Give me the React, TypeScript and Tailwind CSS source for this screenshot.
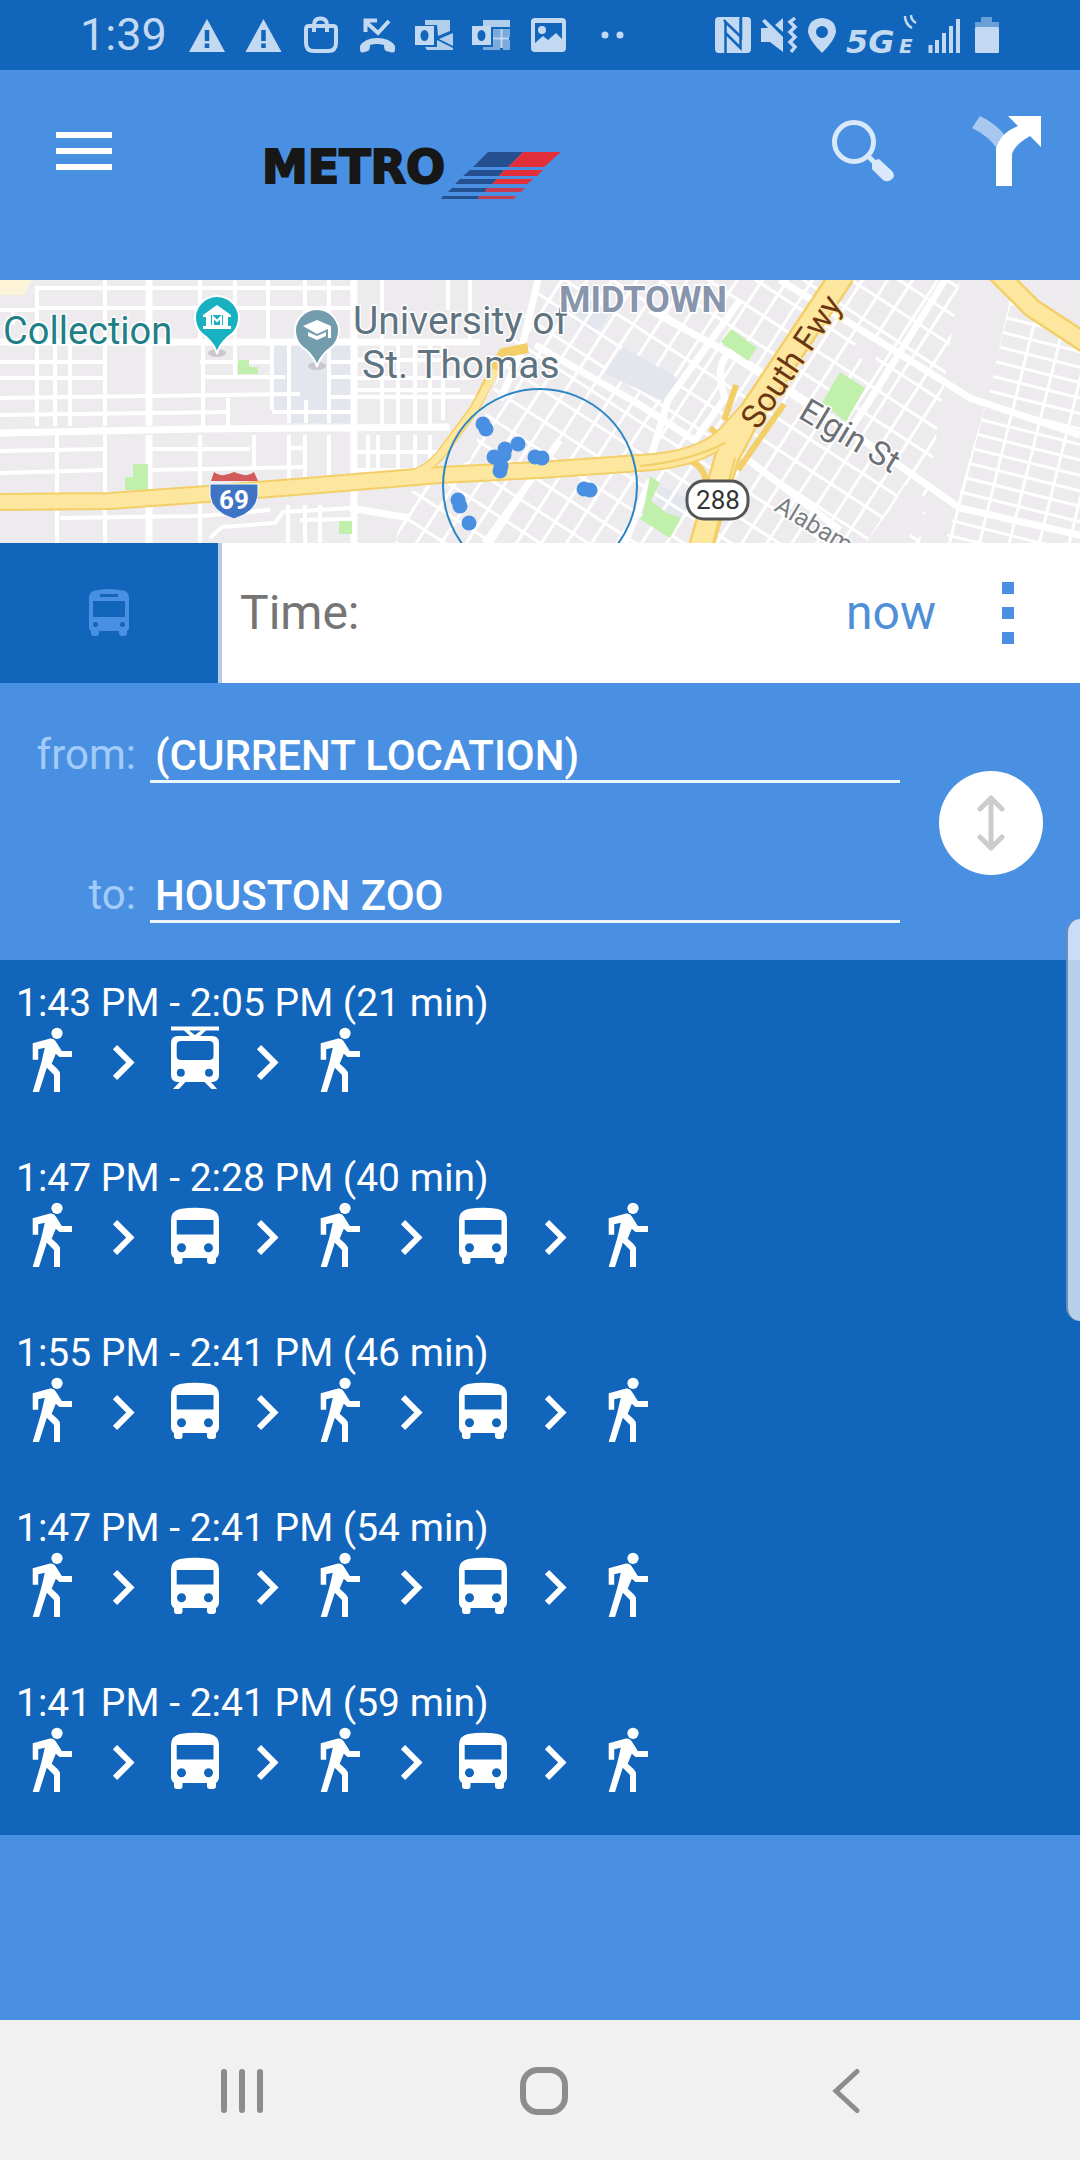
import React, { useState } from 'react';

type Leg = 'walk' | 'tram' | 'bus';

interface Trip {
    id: number;
    time: string;
    legs: Leg[];
}

const trips: Trip[] = [
    { id: 1, time: '1:43 PM - 2:05 PM (21 min)', legs: ['walk', 'tram', 'walk'] },
    { id: 2, time: '1:47 PM - 2:28 PM (40 min)', legs: ['walk', 'bus', 'walk', 'bus', 'walk'] },
    { id: 3, time: '1:55 PM - 2:41 PM (46 min)', legs: ['walk', 'bus', 'walk', 'bus', 'walk'] },
    { id: 4, time: '1:47 PM - 2:41 PM (54 min)', legs: ['walk', 'bus', 'walk', 'bus', 'walk'] },
    { id: 5, time: '1:41 PM - 2:41 PM (59 min)', legs: ['walk', 'bus', 'walk', 'bus', 'walk'] },
];

const legNames: Record<Leg, string> = { walk: 'Walk', tram: 'Rail', bus: 'Bus' };

const LegIcon: React.FC<{ leg: Leg }> = ({ leg }) => (
    <svg viewBox="0 0 72 72" className="size-[72px] shrink-0" fill="white" role="img" aria-label={legNames[leg]}>
        {leg === 'walk' && (
            <>
                <circle cx="41" cy="9.3" r="5.6" />
                <path d="M16.7 19.3L34 14.6Q37.5 14 39.5 17L45.8 27H56V33H43.5L39.8 29.7L35.7 39.7L41.5 45Q44 47.500 44 50V68H38V51L30.800 43.7L23 68H16.700L25.300 38.700L28.800 23.700L22.200 25.300V35.700H16.700Z" />
            </>
        )}
        {leg === 'tram' && (
            <>
                <path d="M11 2.500H59V6.500H46L40 12H30L24 6.500H11ZM29 6.500L35 11L41 6.500Z" fillRule="evenodd" />
                <path
                    fillRule="evenodd"
                    d="M18 12H52Q59 12 59 19V51Q59 58 52 58H51L57 65H51.500L44.500 58H25.500L19 65H13L19.500 58H18Q11 58 11 51V19Q11 12 18 12ZM21 17Q16.700 17 16.700 21V32Q16.700 36 21 36H49Q53.500 36 53.500 32V21Q53.500 17 49 17ZM16.800 48.700A4 4 0 1 0 24.800 48.700A4 4 0 1 0 16.800 48.700ZM45 48.700A4 4 0 1 0 53 48.700A4 4 0 1 0 45 48.700Z"
                />
            </>
        )}
        {leg === 'bus' && (
            <path
                fillRule="evenodd"
                d="M11 21Q11 12 20 10Q35 7.500 50 10Q59 12 59 21V53Q59 57 56 59V62Q56 65 53 65H50Q47 65 47 62V59H22.500V62Q22.500 65 20 65H17Q14 65 14 62V59Q11 57 11 53ZM16.700 21V35.500H53.500V21ZM17 48.700A4.500 4.500 0 1 0 26 48.700A4.500 4.500 0 1 0 17 48.700ZM44 48.700A4.500 4.500 0 1 0 53 48.700A4.500 4.500 0 1 0 44 48.700Z"
            />
        )}
    </svg>
);

const Chevron: React.FC = () => (
    <svg viewBox="0 0 72 72" className="size-[72px] shrink-0" fill="none" stroke="white" strokeWidth="6" aria-hidden="true">
        <path d="M27 23.200L42.300 38.500L27 53.800" />
    </svg>
);

const StatusBar: React.FC = () => (
    <div className="flex h-[70px] items-center justify-between bg-[#1165bb] px-20 text-[#c3d9f1]">
        <div className="flex items-center">
            <span className="w-[108px] text-[45px] leading-[48px]">1:39</span>
            <svg viewBox="189 0 440 70" className="h-[70px] w-[440px]" fill="currentColor" aria-hidden="true">
                {[208, 264.5].map((x) => (
                    <g key={x}>
                        <path d={`M${x} 19L${x + 18} 52H${x - 18}Z`} />
                        <path d={`M${x} 30V41M${x} 43.500V48`} stroke="#1165bb" strokeWidth="4.500" />
                    </g>
                ))}
                <path d="M310 26H334Q337 26 337 29V43Q337 51 329 51H315Q307 51 307 43V29Q307 26 310 26ZM315 32V25Q315 18.500 321.500 18.500Q328 18.500 328 25V32" fill="none" stroke="currentColor" strokeWidth="4" />
                <path d="M367 22L379 33L390 21M366.500 32V20.500H378" fill="none" stroke="currentColor" strokeWidth="4" />
                <path d="M361 50V46Q366 38 378 38Q391 38 396 46V50Q396 53 393 52.500L387 51Q385 50 385 45Q378 43 371 45Q371 50 369 51L364 52.500Q361 53 361 50Z" />
                <path d="M426 20H451V31L439 36L438 25H426ZM454 33V46L440 39ZM426 47H438V40L454 48V50H428Z" opacity=".9" />
                <path fillRule="evenodd" d="M416 26H435V45H416ZM425.500 30A4 5.500 0 1 0 425.500 41A4 5.500 0 1 0 425.500 30Z" />
                <path d="M484 20H511V27H484Z" opacity=".9" />
                <path d="M494 29H501V37H494ZM504 29H511V37H504ZM494 40H501V50H484V47H494ZM504 40H511V50H504Z" opacity=".6" />
                <path d="M494 38.500H510M502.500 29V48" stroke="currentColor" strokeWidth="2.500" />
                <path fillRule="evenodd" d="M473 26H492V45H473ZM482.500 30A4 5.500 0 1 0 482.500 41A4 5.500 0 1 0 482.500 30Z" />
                <path fillRule="evenodd" d="M536 18H563Q567 18 567 22V48Q567 52 563 52H536Q532 52 532 48V22Q532 18 536 18ZM536 23V43L544 36L549 40L557 33L563 39V23Z" />
                <circle cx="543" cy="30" r="4" />
                <circle cx="606" cy="35" r="3.500" />
                <circle cx="621" cy="35" r="3.500" />
            </svg>
        </div>
        <svg viewBox="712 0 288 70" className="h-[70px] w-[288px]" fill="currentColor" aria-hidden="true">
            <rect x="715" y="17" width="36" height="36" rx="4" />
            <path d="M725.500 53V22L741 37V17M725.500 22L724 20M740.500 18V48L725.500 33" fill="none" stroke="#1165bb" strokeWidth="2.500" />
            <path d="M761 28H768L762 21L765 19L783 37V52L770 42H761ZM783 18V32L775 25Z" />
            <path d="M795 18L790 22L795 27L790 32L795 37L790 42L795 47L791 52" fill="none" stroke="currentColor" strokeWidth="3.500" />
            <path fillRule="evenodd" d="M822 18Q836 19 836 32Q835 40 822 53Q809 40 808 32Q808 19 822 18ZM822 26A6 6 0 1 0 822 38A6 6 0 1 0 822 26Z" />
            <text x="846" y="53" fontFamily="DejaVu Sans, sans-serif" fontStyle="italic" fontWeight="700" fontSize="32">5G</text>
            <text x="899" y="53" fontFamily="DejaVu Sans, sans-serif" fontStyle="italic" fontWeight="700" fontSize="20">E</text>
            <path d="M905 16Q905 24 912 28M911 15Q911 20 916 23" fill="none" stroke="currentColor" strokeWidth="2.500" />
            <path d="M930.500 45V53M937 40V53M944 33V53M951 26V53M958 19V53" stroke="currentColor" strokeWidth="4" />
            <path d="M981 17H992V22H999V27H975V22H981Z" opacity=".5" />
            <rect x="975" y="27" width="24" height="26" rx="1" />
        </svg>
    </div>
);

const Header: React.FC = () => (
    <header className="flex h-[210px] items-center bg-[#4a90e2] pr-[38px] pb-12 pl-14">
        <button aria-label="Menu" className="flex w-14 flex-col gap-[10px]">
            <span className="h-[6px] w-full bg-white" />
            <span className="h-[6px] w-full bg-white" />
            <span className="h-[6px] w-full bg-white" />
        </button>
        <a href="#" className="mt-12 ml-[150px] flex items-start">
            <span className="font-['DejaVu_Sans',sans-serif] text-[46px] leading-8 font-bold text-[#171717] [-webkit-text-stroke:2px_#171717]">METRO</span>
            <svg viewBox="0 0 120 48" className="-ml-1 h-12 w-[120px]" aria-hidden="true">
                <path fill="#25508f" d="M47 1H82L67 16H32ZM29 19H63L58 25H22ZM19 28H56L51 33H14ZM11 37H46L44 41H7ZM2 45H38L37 48H0Z" />
                <path fill="#e22f3a" d="M82 1H120L103 16H67ZM63 19H102L96 25H58ZM56 28H92L86 33H51Z" />
                <path fill="#c63c55" d="M46 37H84L80 41H44ZM38 45H75L73 48H37Z" />
            </svg>
        </a>
        <button aria-label="Search" className="ml-auto">
            <svg viewBox="833 121 62 62" className="size-[62px]" fill="none" stroke="#d9e8fa">
                <circle cx="855" cy="143" r="19.500" strokeWidth="5" />
                <path d="M869 157L877 165" strokeWidth="5" />
                <path d="M873 162L880 160L893 172Q897 177 893 180Q889 184 884 181L873 170Z" fill="#d9e8fa" stroke="none" />
            </svg>
        </button>
        <button aria-label="Routes" className="ml-[78px]">
            <svg viewBox="973 117 70 70" className="size-[70px]">
                <path fill="#a9c8f0" d="M981 117Q998 125 1007 138L999 151Q990 137 973 129Z" />
                <path fill="white" d="M1009 117H1042V148L1031 137Q1014 147 1013 156V187H997V150Q1001 134 1019 127Z" />
            </svg>
        </button>
    </header>
);

const range = (from: number, to: number, step: number) => {
    const out: number[] = [];
    for (let v = from; v <= to; v += step) out.push(v);
    return out;
};

const westStreets = [
    'M0 30H37V8H354M37 28H354M0 82H105M200 82H272M328 82H354M0 98H105M203 97H285M328 97H354M0 118L150 116L300 114M328 117H480M0 135L228 132M272 132H354',
    'M0 171L105 169M150 169H250M0 193L105 190M150 190L305 187M60 238L200 236L270 230M210 258L222 247L275 243L283 232L352 228M354 80H480M354 98H470M354 110H460M354 172H440M354 190H420M290 168H305M300 240L352 239',
    'M13 28V45M37 8V146M55 62V146M70 62V146M105 0V146M105 155V263M57 155V263M200 0V60M203 62V146M200 155V263M235 0V97M268 0V62M272 62V130M289 62V143M289 155V206M305 0V62M306 120V143M305 155V200M329 0V143M329 155V205M254 155V190M228 118V146M382 0V144M398 62V144M415 62V144M430 62V144M443 62V140M368 155V200M378 155V200M398 155V190M415 155V190M430 155V185M288 225V263M305 225V263M320 225V263M448 0V30M470 0V60',
];

const stops: [number, number][] = [
    [483, 144], [486, 149], [518, 164], [505, 169], [504, 175], [494, 177], [501, 186], [500, 191],
    [535, 177], [542, 178], [584, 209], [590, 210], [458, 220], [460, 226], [469, 243],
];

const MapView: React.FC = () => (
    <svg
        viewBox="0 0 1080 263"
        preserveAspectRatio="xMidYMid slice"
        className="block h-[263px] w-full bg-[#eeebee]"
        role="img"
        aria-label="Map of nearby stops"
    >
        <defs>
            <clipPath id="central">
                <path d="M540 0H960L920 263H395L405 215L470 180L500 90Z" />
            </clipPath>
            <clipPath id="east">
                <path d="M1010 20L1080 70V263H945L990 110Z" />
            </clipPath>
        </defs>
        <path fill="#fdf3d6" d="M0 0H32L24 15H0Z" />
        <path fill="#e3e7ed" d="M272 63H352V143H289V132H272Z" />

        {/* street grid west of the spur */}
        <g fill="none" stroke="white" strokeWidth="4">
            {westStreets.map((d) => (
                <path key={d} d={d} />
            ))}
        </g>
        <path d="M0 153L200 149L450 147M149 0V146M149 155V263M354 0V263M0 62H480" fill="none" stroke="white" strokeWidth="7" />

        {/* rotated downtown grid */}
        <g clipPath="url(#central)">
            <path d="M380 0H1080V263H380Z" fill="#eeebee" />
            <path fill="#e3e7ed" d="M590 20L610 34L595 55L572 40ZM660 205L690 220L680 245L655 225Z" />
            <g transform="translate(720 170) rotate(33)" stroke="white">
                {range(-330, 370, 21).map((v) => (
                    <path key={`v${v}`} d={`M${v} -400V400`} strokeWidth="3" />
                ))}
                {range(-370, 330, 26).map((v) => (
                    <path key={`h${v}`} d={`M-400 ${v}H400`} strokeWidth="3" />
                ))}
            </g>
            <path fill="#eeebee" d="M905 205L930 220L905 263H865L890 230ZM865 50L885 62L872 85L850 72Z" />
            <path fill="#e3e7ed" d="M623 67L681 100L667 123L604 93Z" />
        </g>
        <g clipPath="url(#east)">
            <path d="M900 0H1080V263H900Z" fill="#eeebee" />
            <g transform="translate(1000 160) rotate(14)" stroke="white" strokeWidth="3">
                {range(-150, 150, 15).map((v) => (
                    <path key={`h${v}`} d={`M-200 ${v}H200`} />
                ))}
                {range(-140, 140, 29).map((v) => (
                    <path key={`v${v}`} d={`M${v} -200V200`} />
                ))}
            </g>
        </g>
        <g fill="none" stroke="white" strokeWidth="7">
            <path d="M535 65L640 125L694 160M650 30L750 85L820 130L960 228L1080 255M780 0L900 74L970 118L1080 155M945 0L870 120L850 150M735 170L840 250M693 163L725 118Q712 80 735 70" />
            <path d="M538 0L520 75L500 120M650 180L668 120L740 20M650 200L625 263M560 160L485 263M350 228L410 238" />
        </g>

        <g fill="#c0f0ac">
            <path d="M133 184H148V210H125V197H133ZM238 80H249V87H258V94H238ZM339 241H352V254H339Z" />
            <path d="M731 49L757 68L748 81L721 62ZM840 92L865 108L846 142L822 123ZM650 196L660 203L642 238ZM650 220L667 233L681 238L670 258L640 239Z" />
        </g>

        {/* freeways, border first and then the fill */}
        <g fill="none" strokeLinejoin="round">
            <g stroke="#f3cf68">
                <path d="M405 197Q430 190 444 170L475 128L493 92L503 73L528 68" strokeWidth="10" />
                <path d="M736 105Q728 130 724 140M710 148L720 156M688 180Q702 184 706 200M738 190L784 124" strokeWidth="6" />
                <path d="M843 -6L748 137L727 177L700 270" strokeWidth="26" />
                <path d="M996 -8L1032 28L1090 66" strokeWidth="21" />
                <path d="M-5 222L110 221L207 214L344 203L440 195L540 190L640 183Q700 180 725 155L748 130" strokeWidth="18" />
            </g>
            <g stroke="#fde69d">
                <path d="M405 197Q430 190 444 170L475 128L496 90" strokeWidth="7" />
                <path d="M843 -6L748 137L727 177L700 270" strokeWidth="21" />
                <path d="M996 -8L1032 28L1090 66" strokeWidth="16" />
                <path d="M-5 222L110 221L207 214L344 203L440 195L540 190L640 183Q700 180 725 155L748 130" strokeWidth="14" />
            </g>
            <path d="M640 186Q690 181 725 163M713 263L735 178" stroke="#f3cf68" strokeWidth="2" />
        </g>

        <circle cx="540" cy="206" r="97" fill="none" stroke="#2c86c4" strokeWidth="2" />
        <g fill="#4a90e2">
            {stops.map(([x, y]) => (
                <circle key={`${x}-${y}`} cx={x} cy={y} r="7.500" />
            ))}
        </g>

        {/* route shields */}
        <path fill="#3f74c4" stroke="white" d="M210 204H258V216Q256 232 234 239Q212 232 210 216Z" />
        <path fill="#d25c5c" d="M214 192Q219 196 224 195Q230 194 234 192Q239 194 244 195Q249 196 254 192L258 201H211Z" />
        <text x="234" y="229" textAnchor="middle" fill="white" fontSize="26" fontWeight="700">69</text>
        <rect x="687" y="201" width="61" height="38" rx="17" fill="white" stroke="#555" strokeWidth="3" />
        <text x="718" y="229" textAnchor="middle" fill="#333" fontSize="26">288</text>

        {/* place pins */}
        <ellipse cx="217" cy="73" rx="9" ry="4" fill="#c9c7cb" />
        <path fill="#18b1c2" stroke="white" strokeWidth="2" d="M217 74Q215 65 206 57A22 22 0 1 1 228 57Q219 65 217 74Z" />
        <path fill="white" fillRule="evenodd" d="M203 35L217 25L231 35V37H228V46H231V49H203V46H206V37H203ZM211 35V45H223V35Z" />
        <path stroke="white" strokeWidth="2" fill="none" d="M213 45V37L217 41L221 37V45" />
        <ellipse cx="317" cy="86" rx="9" ry="4" fill="#c9c7cb" />
        <path fill="#739cad" stroke="white" strokeWidth="2" d="M317 87Q315 78 306 70A22 22 0 1 1 328 70Q319 78 317 87Z" />
        <path fill="white" d="M303 46L317 40L331 46V58H328V49L317 54ZM308 52L317 56L326 52V56L317 60L308 56Z" />

        <g stroke="white" strokeWidth="3" paintOrder="stroke" strokeLinejoin="round">
            <text x="3" y="64" fontSize="38" fill="#207f86">Collection</text>
            <text x="353" y="54" fontSize="39" fill="#5f7480">University of</text>
            <text x="362" y="98" fontSize="39" fill="#5f7480">St. Thomas</text>
            <text x="559" y="32" fontSize="36" fontWeight="700" fill="#8795ad">MIDTOWN</text>
            <text transform="translate(758 151) rotate(-56)" fontSize="33" fill="#6b3712" stroke="#fde69d">South Fwy</text>
            <text transform="translate(797 137) rotate(31)" fontSize="33" fill="#6d7176">Elgin St</text>
            <text transform="translate(773 230) rotate(31)" fontSize="25" fill="#7b7f84">Alabama St</text>
        </g>
    </svg>
);

const TimeRow: React.FC = () => (
    <div className="flex h-[140px] bg-white">
        <button aria-label="Bus" className="flex w-[222px] items-center justify-center border-r-4 border-[#b5cbe8] bg-[#1165bb]">
            <svg viewBox="0 0 40 48" className="h-12 w-10" fill="#4a90e2">
                <path
                    fillRule="evenodd"
                    d="M0 9Q0 4 4 2Q20 -2 36 2Q40 4 40 9V39Q40 41 38 42V44Q38 47 35 47H33Q30 47 30 44V42H10V44Q10 47 7 47H5Q2 47 2 44V42Q0 41 0 39ZM11 5V8H29V5ZM4 12V28H36V12ZM4 35.500A2.500 2.500 0 1 0 9 35.500A2.500 2.500 0 1 0 4 35.500ZM31 35.500A2.500 2.500 0 1 0 36 35.500A2.500 2.500 0 1 0 31 35.500Z"
                />
            </svg>
        </button>
        <div className="flex flex-1 items-center pr-[66px] pl-[18px] text-[48px]">
            <span className="text-[#757575]">Time:</span>
            <button className="ml-auto text-[#4f8fd8]">now</button>
            <button aria-label="More options" className="ml-[66px] flex flex-col gap-[13px]">
                <span className="size-3 bg-[#4a90e2]" />
                <span className="size-3 bg-[#4a90e2]" />
                <span className="size-3 bg-[#4a90e2]" />
            </button>
        </div>
    </div>
);

interface PlaceFieldProps {
    id: string;
    label: string;
    value: string;
    onChange: (value: string) => void;
}

const PlaceField: React.FC<PlaceFieldProps> = ({ id, label, value, onChange }) => (
    <div className="flex gap-[14px] text-[42px] leading-[48px]">
        <label htmlFor={id} className="w-[136px] shrink-0 text-right text-[#a3cbfa]">{label}</label>
        <input
            id={id}
            type="text"
            value={value}
            onChange={(e) => onChange(e.target.value)}
            className="h-[52px] min-w-0 flex-1 border-b-[3px] border-[#edf5ff] pl-[5px] font-medium text-white outline-none"
        />
    </div>
);

const PlannerForm: React.FC = () => {
    const [from, setFrom] = useState('(CURRENT LOCATION)');
    const [to, setTo] = useState('HOUSTON ZOO');

    const swap = () => {
        setFrom(to);
        setTo(from);
    };

    return (
        <form className="flex items-center bg-[#4a90e2]">
            <div className="flex flex-1 flex-col gap-[88px] pt-12 pb-[37px]">
                <PlaceField id="from" label="from:" value={from} onChange={setFrom} />
                <PlaceField id="to" label="to:" value={to} onChange={setTo} />
            </div>
            <div className="flex w-[180px] justify-center pt-[2px] pl-[2px]">
                <button type="button" onClick={swap} aria-label="Swap from and to" className="flex size-[104px] items-center justify-center rounded-full bg-white">
                    <svg viewBox="0 0 28 56" className="h-14 w-7" fill="none" stroke="#cccccc" strokeWidth="5" strokeLinecap="round" strokeLinejoin="round">
                        <path d="M14 4V52M3 14L14 3L25 14M3 42L14 53L25 42" />
                    </svg>
                </button>
            </div>
        </form>
    );
};

const TripList: React.FC = () => (
    <ul className="bg-[#1165bb]">
        {trips.map((trip) => (
            <li key={trip.id} className="px-4 pt-[22px] pb-[39px] text-white">
                <p className="text-[39px] leading-[42px]">{trip.time}</p>
                <div className="flex">
                    {trip.legs.map((leg, i) => (
                        <React.Fragment key={i}>
                            {i > 0 && <Chevron />}
                            <LegIcon leg={leg} />
                        </React.Fragment>
                    ))}
                </div>
            </li>
        ))}
    </ul>
);

const NavBar: React.FC = () => (
    <nav className="flex h-[140px] bg-[#f1f1f1] pt-[2px] pr-[83px] pl-[91px]">
        <button aria-label="Recent apps" className="flex flex-1 items-center justify-center gap-3">
            <span className="h-11 w-[6px] rounded-full bg-[#8c8c8c]" />
            <span className="h-11 w-[6px] rounded-full bg-[#8c8c8c]" />
            <span className="h-11 w-[6px] rounded-full bg-[#8c8c8c]" />
        </button>
        <button aria-label="Home" className="flex flex-1 items-center justify-center">
            <span className="size-12 rounded-[18px] border-[6px] border-[#8c8c8c]" />
        </button>
        <button aria-label="Back" className="flex flex-1 items-center justify-center">
            <svg viewBox="0 0 28 46" className="h-[46px] w-7" fill="none" stroke="#8c8c8c" strokeWidth="5" strokeLinecap="round">
                <path d="M25 3.500L4 23L25 42.500" />
            </svg>
        </button>
    </nav>
);

export default function App() {
    return (
        <div className="relative flex min-h-screen flex-col overflow-hidden bg-[#4a90e2] font-['Roboto',sans-serif]">
            <StatusBar />
            <Header />
            <main className="flex-1">
                <MapView />
                <TimeRow />
                <PlannerForm />
                <TripList />
            </main>
            <NavBar />
            {/* edge panel handle */}
            <div className="absolute top-[919px] right-0 h-[402px] w-[14px] rounded-l-[16px] border-l-2 border-[#6c8db5] bg-white/70" />
        </div>
    );
}
